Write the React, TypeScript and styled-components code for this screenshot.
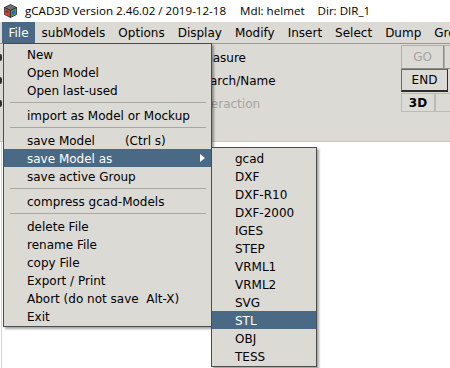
import React from "react";
import styled, { createGlobalStyle, css } from "styled-components";

const GlobalStyle = createGlobalStyle`
  html, body {
    margin: 0;
    padding: 0;
    background: #ffffff;
  }
  body {
    font-family: "DejaVu Sans", sans-serif;
    font-size: 12px;
  }
`;

const GRAY = "#dcdad5";
const SELECT = "#4a6984";

const Window = styled.div`
  position: relative;
  width: 450px;
  height: 368px;
  overflow: hidden;
  display: flex;
  flex-direction: column;
  background: #ffffff;
`;

const TitleBar = styled.div`
  height: 22px;
  flex: none;
  display: flex;
  align-items: center;
  padding-left: 4px;
  background: #ffffff;
  font-family: "Open Sans", "Noto Sans", sans-serif;
  font-size: 11.6px;
  color: #000;
  white-space: pre;
`;

const TitlePart = styled.span<{ $gap?: number }>`
  margin-left: ${(p) => p.$gap ?? 0}px;
  line-height: 22px;
`;

const MenuBar = styled.div`
  height: 21px;
  flex: none;
  display: flex;
  align-items: stretch;
  padding-left: 2px;
  background: ${GRAY};
`;

const MenuTitle = styled.div<{ $active?: boolean }>`
  display: flex;
  align-items: center;
  padding: 1px 6.5px 0;
  white-space: pre;
  color: #000;
  ${(p) =>
    p.$active &&
    css`
      background: ${SELECT};
      color: #fff;
    `}
`;

const ToolPanel = styled.div`
  flex: none;
  height: 96px;
  background: ${GRAY};
  border-top: 1px solid #9a978f;
  border-bottom: 1px solid #c9c7c2;
  display: flex;
  flex-direction: column;
  padding-top: 1px;
`;

const ToolRow = styled.div<{ $h: number }>`
  height: ${(p) => p.$h}px;
  display: grid;
  grid-template-columns: 195px 1fr 49px;
  align-items: center;
`;

const Mark = styled.div`
  width: 2px;
  height: 7px;
  background: #333;
  border-radius: 0 3px 3px 0;
`;

const RowLabel = styled.span<{ $disabled?: boolean }>`
  color: ${(p) => (p.$disabled ? "#a3a3a3" : "#000")};
  white-space: pre;
  padding-top: 1px;
`;

const ButtonGroup = styled.div<{ $inset?: boolean }>`
  display: flex;
  align-self: stretch;
  align-items: stretch;
  margin: ${(p) => (p.$inset ? "1px 0 2px" : "0")};
`;

const ToolButton = styled.div<{ $w: number; $kind?: "disabled" | "strong" | "plain" }>`
  width: ${(p) => p.$w}px;
  flex: none;
  box-sizing: border-box;
  display: flex;
  align-items: center;
  justify-content: center;
  background: ${GRAY};
  border: 1px solid #aeaba5;
  color: #000;
  ${(p) =>
    p.$kind === "disabled" &&
    css`
      color: #a3a3a3;
      border-color: #b3b0aa;
      border-right-color: #8e8b85;
      border-bottom-color: #8e8b85;
    `}
  ${(p) =>
    p.$kind === "strong" &&
    css`
      border-color: #6b6963;
      border-right-color: #2c2c2c;
      border-bottom: 2px solid #2c2c2c;
    `}
  ${(p) =>
    p.$kind === "plain" &&
    css`
      font-weight: bold;
      border-color: #bdbab4;
    `}
`;

const Canvas = styled.div`
  flex: 1;
  background: #ffffff;
  border-left: 1px solid #d4d4d4;
  margin-left: 1px;
`;

const MenuPanel = styled.div<{ $left: number; $top: number; $width: number }>`
  position: absolute;
  left: ${(p) => p.$left}px;
  top: ${(p) => p.$top}px;
  width: ${(p) => p.$width}px;
  box-sizing: border-box;
  background: ${GRAY};
  border: 1px solid #4b4b4b;
  padding: 1px 0;
  box-shadow: 2px 2px 2px rgba(0, 0, 0, 0.35);
`;

const MenuItem = styled.div<{ $active?: boolean }>`
  position: relative;
  height: 18px;
  box-sizing: border-box;
  display: flex;
  align-items: center;
  padding: 1px 0 0 23px;
  white-space: pre;
  color: #000;
  ${(p) =>
    p.$active &&
    css`
      background: ${SELECT};
      color: #fff;
    `}
`;

const Accel = styled.span`
  margin-left: 30px;
`;

const Arrow = styled.span`
  position: absolute;
  right: 6px;
  top: 5px;
  width: 0;
  height: 0;
  border-top: 4px solid transparent;
  border-bottom: 4px solid transparent;
  border-left: 5px solid #ffffff;
`;

const Separator = styled.div`
  height: 7px;
  display: flex;
  align-items: center;
  padding: 0 5px 0 6px;
  &::after {
    content: "";
    flex: 1;
    height: 1px;
    background: #aaa7a1;
  }
`;

const AppIcon = () => (
  <svg width="13" height="14" viewBox="0 0 13 14" style={{ flex: "none", marginRight: 8 }}>
    <polygon points="6.5,0.5 12.5,3.5 6.5,6.5 0.5,3.5" fill="#6d7277" stroke="#2a2a2a" strokeWidth="0.8" />
    <polygon points="0.5,3.5 6.5,6.5 6.5,13.5 0.5,10.5" fill="#d8402c" stroke="#2a2a2a" strokeWidth="0.8" />
    <polygon points="6.5,6.5 12.5,3.5 12.5,10.5 6.5,13.5" fill="#3aa04a" stroke="#2a2a2a" strokeWidth="0.8" />
    <polygon points="8,8 11,6.5 11,9 8,10.5" fill="#2a55c8" />
    <polygon points="2,6 4.5,7.3 4.5,9.5 2,8.3" fill="#2a2a2a" opacity="0.55" />
  </svg>
);

type Entry = { sep: true } | { label: string; accel?: string; active?: boolean; arrow?: boolean };

const fileMenu: Entry[] = [
  { label: "New" },
  { label: "Open Model" },
  { label: "Open last-used" },
  { sep: true },
  { label: "import as Model or Mockup" },
  { sep: true },
  { label: "save Model", accel: "(Ctrl s)" },
  { label: "save Model as", active: true, arrow: true },
  { label: "save active Group" },
  { sep: true },
  { label: "compress gcad-Models" },
  { sep: true },
  { label: "delete File" },
  { label: "rename File" },
  { label: "copy File" },
  { label: "Export / Print" },
  { label: "Abort (do not save  Alt-X)" },
  { label: "Exit" },
];

const saveAsMenu: Entry[] = [
  "gcad",
  "DXF",
  "DXF-R10",
  "DXF-2000",
  "IGES",
  "STEP",
  "VRML1",
  "VRML2",
  "SVG",
  "STL",
  "OBJ",
  "TESS",
].map((label) => ({ label, active: label === "STL" }));

const menuTitles = ["File", "subModels", "Options", "Display", "Modify", "Insert", "Select", "Dump", "Group"];

const renderEntries = (entries: Entry[]) =>
  entries.map((e, i) =>
    "sep" in e ? (
      <Separator key={i} />
    ) : (
      <MenuItem key={i} $active={e.active}>
        <span>{e.label}</span>
        {e.accel && <Accel>{e.accel}</Accel>}
        {e.arrow && <Arrow />}
      </MenuItem>
    )
  );

export default function App() {
  return (
    <>
      <GlobalStyle />
      <Window>
        <TitleBar>
          <AppIcon />
          <TitlePart>gCAD3D Version 2.46.02 / 2019-12-18</TitlePart>
          <TitlePart $gap={14}>Mdl: helmet</TitlePart>
          <TitlePart $gap={13}>Dir: DIR_1</TitlePart>
        </TitleBar>
        <MenuBar>
          {menuTitles.map((t, i) => (
            <MenuTitle key={t} $active={i === 0}>
              {t}
            </MenuTitle>
          ))}
        </MenuBar>
        <ToolPanel>
          <ToolRow $h={24}>
            <Mark />
            <RowLabel>Measure</RowLabel>
            <ButtonGroup>
              <ToolButton $w={43} $kind="disabled">GO</ToolButton>
              <ToolButton $w={10} $kind="disabled" />
            </ButtonGroup>
          </ToolRow>
          <ToolRow $h={23}>
            <Mark />
            <RowLabel>Search/Name</RowLabel>
            <ButtonGroup>
              <ToolButton $w={47} $kind="strong">END</ToolButton>
            </ButtonGroup>
          </ToolRow>
          <ToolRow $h={22}>
            <Mark />
            <RowLabel $disabled>Interaction</RowLabel>
            <ButtonGroup $inset>
              <ToolButton $w={34} $kind="plain">3D</ToolButton>
              <ToolButton $w={20} $kind="plain" />
            </ButtonGroup>
          </ToolRow>
        </ToolPanel>
        <Canvas />
        <MenuPanel $left={3} $top={43} $width={209}>
          {renderEntries(fileMenu)}
        </MenuPanel>
        <MenuPanel $left={211} $top={147} $width={106}>
          {renderEntries(saveAsMenu)}
        </MenuPanel>
      </Window>
    </>
  );
}
